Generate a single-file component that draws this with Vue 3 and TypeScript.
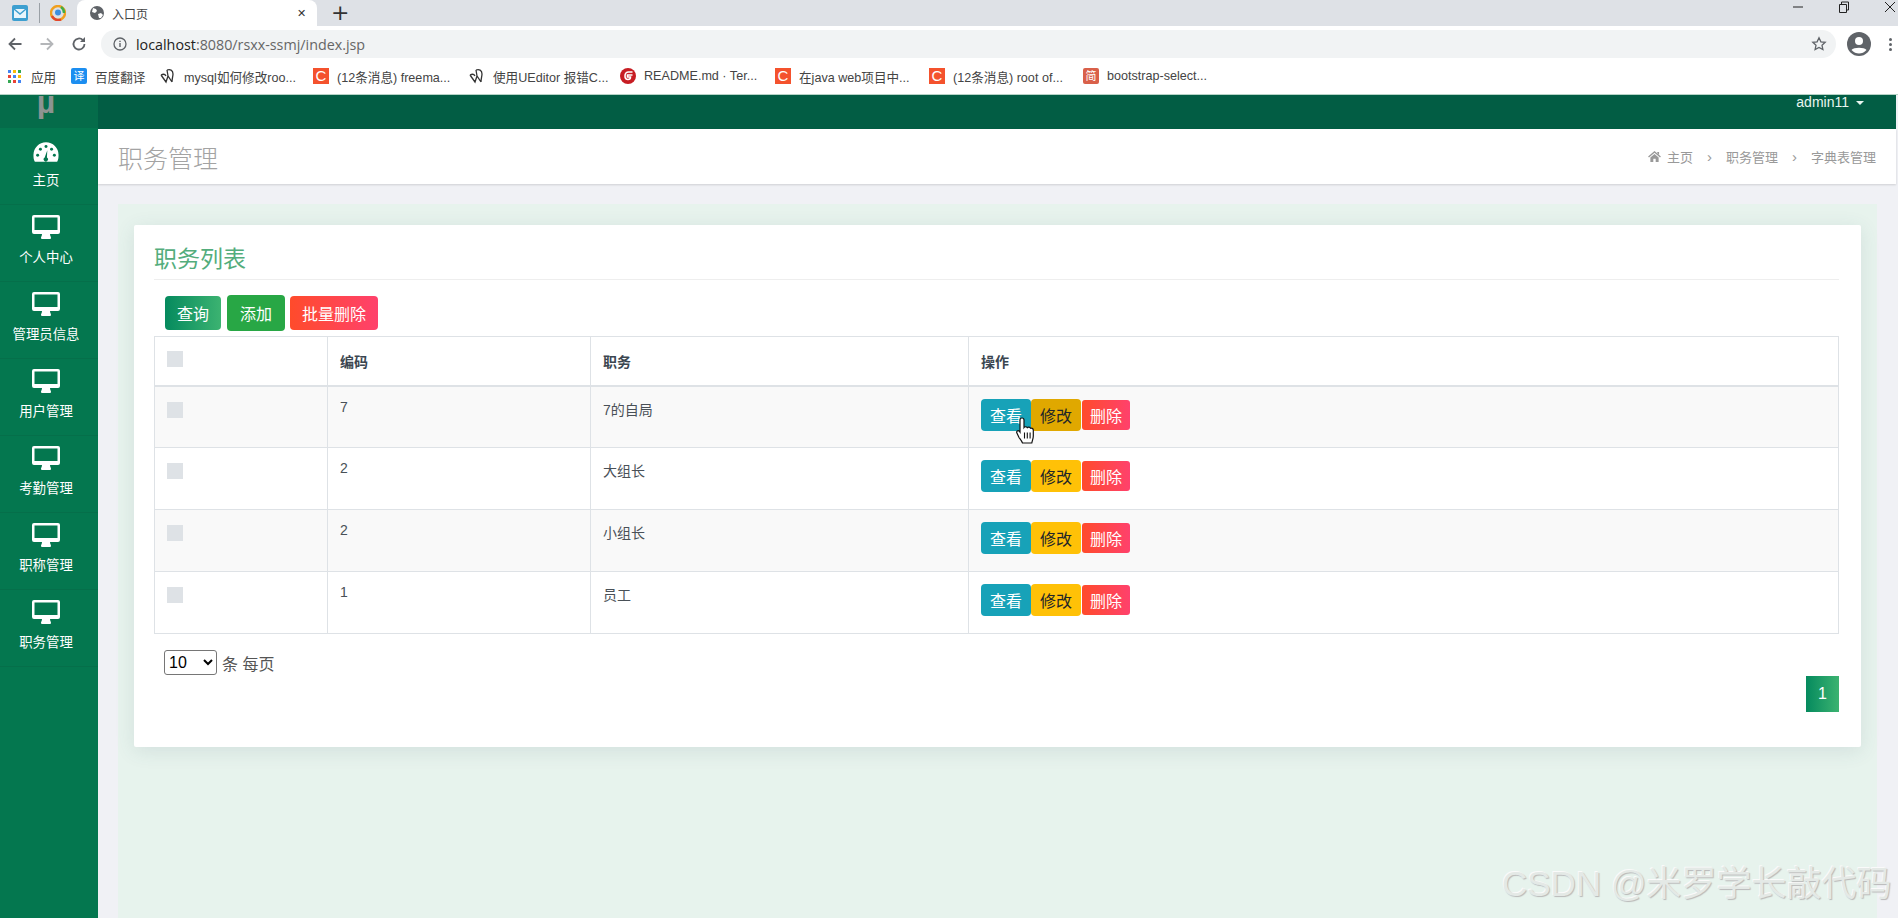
<script setup lang="ts">
interface Bookmark {
  label: string
  icon: 'translate' | 'feather' | 'csdn' | 'gitee' | 'jian'
  width: number
}

interface Post {
  code: string
  name: string
}

const bookmarks: Bookmark[] = [
  { label: '百度翻译', icon: 'translate', width: 89 },
  { label: 'mysql如何修改roo...', icon: 'feather', width: 153 },
  { label: '(12条消息) freema...', icon: 'csdn', width: 156 },
  { label: '使用UEditor 报错C...', icon: 'feather', width: 151 },
  { label: 'README.md · Ter...', icon: 'gitee', width: 155 },
  { label: '在java web项目中...', icon: 'csdn', width: 154 },
  { label: '(12条消息) root of...', icon: 'csdn', width: 154 },
  { label: 'bootstrap-select...', icon: 'jian', width: 130 }
]

const menu: string[] = ['个人中心', '管理员信息', '用户管理', '考勤管理', '职称管理', '职务管理']

const posts: Post[] = [
  { code: '7', name: '7的自局' },
  { code: '2', name: '大组长' },
  { code: '2', name: '小组长' },
  { code: '1', name: '员工' }
]
</script>

<template>
  <div class="page">
    <div class="tabstrip">
      <div class="pinned">
        <svg class="fav" viewBox="0 0 16 16"><rect width="16" height="16" rx="2" fill="#3d9fd0" /><path d="M2 4h12v9H2z" fill="#e8f5fb" /><path d="M2 4l6 5 6-5" fill="none" stroke="#3d9fd0" stroke-width="1.4" /></svg>
        <span class="pin-sep"></span>
        <svg class="fav" viewBox="0 0 16 16"><circle cx="8" cy="8" r="7" fill="none" stroke="#f0a020" stroke-width="2.4" /><path d="M2 11a7 7 0 0 0 9 3.500" fill="none" stroke="#e2452f" stroke-width="2.400" /><path d="M11 2a7 7 0 0 1 3 6" fill="none" stroke="#3fae49" stroke-width="2.400" /><circle cx="8" cy="7.500" r="3" fill="#3d8fe0" /></svg>
      </div>
      <div class="tab">
        <svg class="globe" viewBox="0 0 14 14"><circle cx="7" cy="7" r="7" fill="#5f6368" /><path d="M3 2l3 1 1 2-2 2-3-1zM8 8l3-1 2 2-2 3-2 0z" fill="#fff" /></svg>
        <span class="tab-title">入口页</span>
        <span class="tab-close">✕</span>
      </div>
      <span class="newtab">+</span>
      <div class="win-controls">
        <svg viewBox="0 0 12 12"><path d="M1 6h10" stroke="#222" stroke-width="1" /></svg>
        <svg viewBox="0 0 12 12"><path d="M1.500 3.500h7v8h-7zM3.500 3.500v-2.500h7v8h-2" fill="none" stroke="#222" stroke-width="1" /></svg>
        <svg viewBox="0 0 12 12"><path d="M1 1l10 10M11 1L1 11" stroke="#222" stroke-width="1" /></svg>
      </div>
    </div>

    <div class="toolbar">
      <svg class="nav-icon" viewBox="0 0 16 16"><path d="M14.500 8H2.500M8 2.500L2.500 8 8 13.500" fill="none" stroke="#5f6368" stroke-width="1.800" /></svg>
      <svg class="nav-icon" viewBox="0 0 16 16"><path d="M1.500 8h12M8 2.500L13.500 8 8 13.500" fill="none" stroke="#b4b6b9" stroke-width="1.800" /></svg>
      <svg class="nav-icon" viewBox="0 0 16 16"><path d="M13.500 8a5.500 5.500 0 1 1-1.600-3.900" fill="none" stroke="#5f6368" stroke-width="1.800" /><path d="M14 1v5h-5z" fill="#5f6368" /></svg>
      <div class="address">
        <svg class="info" viewBox="0 0 14 14"><circle cx="7" cy="7" r="6" fill="none" stroke="#5f6368" stroke-width="1.300" /><path d="M7 6v4M7 3.700v1.300" stroke="#5f6368" stroke-width="1.400" /></svg>
        <span class="url"><b>localhost</b>:8080/rsxx-ssmj/index.jsp</span>
        <svg class="star" viewBox="0 0 16 16"><path d="M8 1.800l1.900 4 4.300.500-3.200 3 .9 4.300L8 11.400l-3.900 2.200.9-4.300-3.200-3 4.300-.500z" fill="none" stroke="#5f6368" stroke-width="1.300" /></svg>
      </div>
      <svg class="avatar" viewBox="0 0 24 24"><circle cx="12" cy="12" r="12" fill="#5f6368" /><circle cx="12" cy="9" r="4" fill="#fff" /><path d="M4.500 18c2-3 13-3 15 0-2 2.500-5 3.500-7.500 3.500S6.500 20.500 4.500 18z" fill="#fff" /></svg>
      <span class="dots"><i></i><i></i><i></i></span>
    </div>

    <div class="bookmarks">
      <span class="apps"><i v-for="n in 9" :key="n" :class="`c${n % 4}`"></i></span>
      <span class="apps-label">应用</span>
      <div v-for="mark in bookmarks" :key="mark.label + mark.width" class="mark" :style="{ width: mark.width + 'px' }">
        <span v-if="mark.icon === 'translate'" class="mark-box mark-box--blue">译</span>
        <span v-else-if="mark.icon === 'csdn'" class="mark-box mark-box--orange">C</span>
        <span v-else-if="mark.icon === 'jian'" class="mark-box mark-box--jian">简</span>
        <svg v-else-if="mark.icon === 'gitee'" class="mark-svg" viewBox="0 0 16 16"><circle cx="8" cy="8" r="8" fill="#c71d23" /><path d="M12.500 7H7.500v2h3c0 1.500-1 2.500-2.500 2.500S5 10.500 5 8s1.500-4 3.500-4h4" fill="none" stroke="#fff" stroke-width="1.600" /></svg>
        <svg v-else class="mark-svg" viewBox="0 0 16 16"><path d="M1 7l5 7 2-6 4 6M7 2c3-1 6 0 6 4 0 2-1 5-1 8M1 7c2-1 4-1 5 1M7 2l1 6" fill="none" stroke="#333" stroke-width="1.300" /></svg>
        <span class="mark-label">{{ mark.label }}</span>
      </div>
    </div>

    <div class="shell">
      <aside class="sidebar">
        <div class="logo"><span>µ</span></div>
        <a class="side-item">
          <svg class="side-icon side-icon--gauge" viewBox="0 0 28 24">
            <path d="M2 22.500C.5 20.500 .5 17 .5 15a13.500 13.500 0 0 1 27 0c0 2 0 5.500-1.500 7.500z" fill="#fff" />
            <g fill="#04774f">
              <circle cx="5" cy="15.500" r="1.600" /><circle cx="8" cy="9" r="1.600" /><circle cx="14" cy="6" r="1.600" /><circle cx="20" cy="9" r="1.600" /><circle cx="23" cy="15.500" r="1.600" />
              <path d="M15.400 10l-.4 8a2.300 2.300 0 1 1-2.400 0z" />
            </g>
          </svg>
          <span class="side-label">主页</span>
        </a>
        <a v-for="item in menu" :key="item" class="side-item">
          <svg class="side-icon" viewBox="0 0 28 24">
            <path fill-rule="evenodd" d="M2 0h24a2 2 0 0 1 2 2v15a2 2 0 0 1-2 2h-8c0 2 1 2.500 1 4a1 1 0 0 1-1 1h-8a1 1 0 0 1-1-1c0-1.500 1-2 1-4H2a2 2 0 0 1-2-2V2a2 2 0 0 1 2-2zm.500 2.500v12.500h23V2.500z" fill="#fff" />
          </svg>
          <span class="side-label">{{ item }}</span>
        </a>
      </aside>

      <main class="main">
        <div class="topbar">
          <span class="user">admin11<i class="caret"></i></span>
        </div>
        <header class="heading">
          <h1>职务管理</h1>
          <nav class="crumbs">
            <svg viewBox="0 0 14 12"><path d="M7 0l7 6-1 1-6-5-6 5-1-1zM2.500 7L7 3.200 11.500 7v5H8.300V8.500H5.700V12H2.500zM10 1h2v3l-2-1.700z" fill="#999" /></svg>
            <span>主页</span>
            <em>›</em>
            <span>职务管理</span>
            <em>›</em>
            <span>字典表管理</span>
          </nav>
        </header>

        <section class="content">
          <div class="panel">
            <div class="card">
              <h2 class="card-title">职务列表</h2>
              <div class="actions">
                <button class="btn btn--query" type="button">查询</button>
                <button class="btn btn--add" type="button">添加</button>
                <button class="btn btn--danger" type="button">批量删除</button>
              </div>

              <table class="grid">
                <colgroup>
                  <col style="width: 173px" />
                  <col style="width: 263px" />
                  <col style="width: 378px" />
                  <col />
                </colgroup>
                <thead>
                  <tr>
                    <th class="check-cell"><span class="check"></span></th>
                    <th>编码</th>
                    <th>职务</th>
                    <th>操作</th>
                  </tr>
                </thead>
                <tbody>
                  <tr v-for="(post, index) in posts" :key="post.name">
                    <td class="check-cell"><span class="check"></span></td>
                    <td>{{ post.code }}</td>
                    <td>{{ post.name }}</td>
                    <td class="ops">
                      <div class="ops-row">
                        <button class="mini mini--view" type="button">查看</button>
                        <button class="mini mini--edit" :class="{ 'mini--hover': index === 0 }" type="button">修改</button>
                        <button class="mini mini--del" type="button">删除</button>
                        <svg v-if="index === 0" class="hand" viewBox="0 0 18 27">
                          <path d="M6 1c1.300 0 2 .9 2 2v7.500c.7-1 2.700-1 3.300.2.800-.8 2.700-.7 3.200.6 1-.4 2.700 0 2.800 1.700v6c0 2.500-1 4.500-1.500 7H6.500c-.7-2-2-3.500-3.500-5.500L.9 16c-.8-1.500 1-3 2.400-1.800L4 15.200V3c0-1.100.7-2 2-2z" fill="#fff" stroke="#111" stroke-width="1.200" />
                          <path d="M8.500 15.500v6M11.300 15.500v6M14.100 15.500v6" stroke="#111" stroke-width="1.100" />
                        </svg>
                      </div>
                    </td>
                  </tr>
                </tbody>
              </table>

              <div class="page-size">
                <select class="size-select">
                  <option>10</option>
                </select>
                <span>条 每页</span>
              </div>
              <div class="pager">
                <span class="page-current">1</span>
              </div>
            </div>
          </div>
        </section>
      </main>
    </div>

    <div class="watermark">CSDN @米罗学长敲代码</div>
  </div>
</template>

<style>
  html,
  body {
    margin: 0;
    height: 100%;
    overflow: hidden;
    background: #f0f1f5;
  }
</style>

<style scoped>
  .page {
    position: relative;
    display: flex;
    flex-direction: column;
    height: 918px;
    font-family: "Liberation Sans", "Noto Sans CJK SC", sans-serif;
    color: #555;
    overflow: hidden;
  }

  /* browser chrome */
  .tabstrip {
    display: flex;
    align-items: center;
    height: 26px;
    flex: none;
    background: #dee1e6;
  }

  .pinned {
    display: flex;
    align-items: center;
    width: 77px;
    height: 26px;
    padding-left: 12px;
    box-sizing: border-box;
  }

  .fav {
    width: 16px;
    height: 16px;
  }

  .pin-sep {
    width: 1px;
    height: 20px;
    margin: 0 10px 0 11px;
    background: #9aa0a6;
  }

  .tab {
    display: flex;
    align-items: center;
    width: 240px;
    height: 26px;
    box-sizing: border-box;
    padding: 0 11px 0 13px;
    background: #fff;
    border-radius: 8px 8px 0 0;
  }

  .globe {
    width: 14px;
    height: 14px;
    margin-right: 8px;
  }

  .tab-title {
    flex: 1;
    font-size: 12px;
    color: #444;
  }

  .tab-close {
    font-size: 11px;
    color: #333;
  }

  .newtab {
    margin-left: 14px;
    font-size: 22px;
    line-height: 22px;
    color: #333;
    font-family: "DejaVu Sans", sans-serif;
  }

  .win-controls {
    margin-left: auto;
    display: flex;
    gap: 34px;
    padding-right: 2px;
    align-self: flex-start;
    padding-top: 1px;
  }

  .win-controls svg {
    width: 12px;
    height: 12px;
  }

  .toolbar {
    display: flex;
    align-items: center;
    flex: none;
    height: 28px;
    padding: 4px 0 0 7px;
    background: #fff;
  }

  .nav-icon {
    width: 16px;
    height: 16px;
    margin-right: 16px;
  }

  .address {
    display: flex;
    align-items: center;
    width: 1735px;
    height: 28px;
    box-sizing: border-box;
    margin-left: -2px;
    padding: 0 9px 0 12px;
    background: #f1f3f4;
    border-radius: 14px;
  }

  .info {
    width: 14px;
    height: 14px;
    margin-right: 9px;
  }

  .url {
    flex: 1;
    font-family: "Open Sans", sans-serif;
    font-size: 14.3px;
    color: #666;
  }

  .url b {
    font-weight: 400;
    color: #222;
  }

  .star {
    width: 16px;
    height: 16px;
  }

  .avatar {
    width: 24px;
    height: 24px;
    margin-left: 11px;
  }

  .dots {
    display: flex;
    flex-direction: column;
    gap: 2px;
    margin-left: 18px;
  }

  .dots i {
    width: 3px;
    height: 3px;
    border-radius: 50%;
    background: #5f6368;
  }

  .bookmarks {
    display: flex;
    align-items: center;
    flex: none;
    height: 36px;
    padding-left: 8px;
    box-sizing: border-box;
    background: #fff;
    font-size: 12.6px;
    color: #444;
    white-space: nowrap;
  }

  .apps {
    display: grid;
    grid-template-columns: repeat(3, 3px);
    gap: 2px;
    width: 13px;
  }

  .apps i {
    width: 3px;
    height: 3px;
  }

  .apps .c0 { background: #ea4335; }
  .apps .c1 { background: #4285f4; }
  .apps .c2 { background: #fbbc05; }
  .apps .c3 { background: #34a853; }

  .apps-label {
    width: 40px;
    margin-left: 10px;
  }

  .mark {
    display: flex;
    align-items: center;
    flex: none;
    overflow: hidden;
  }

  .mark-box {
    flex: none;
    width: 16px;
    height: 16px;
    margin-right: 8px;
    line-height: 16px;
    text-align: center;
    color: #fff;
    font-size: 11px;
  }

  .mark-box--blue {
    background: #1c8ef0;
    border-radius: 2px;
  }

  .mark-box--orange {
    background: #f4522d;
    font-size: 15px;
  }

  .mark-box--jian {
    background: #d9604a;
    border-radius: 2px;
  }

  .mark-svg {
    flex: none;
    width: 16px;
    height: 16px;
    margin-right: 8px;
  }

  /* app */
  .shell {
    display: flex;
    flex: 1;
    min-height: 0;
    border-top: 1px solid #b5d3c6;
  }

  .sidebar {
    flex: none;
    width: 98px;
    background: #04774f;
    color: #fff;
  }

  .logo {
    height: 33px;
    padding-right: 6px;
    background: #056c4a;
    overflow: hidden;
    text-align: center;
  }

  .logo span {
    display: block;
    height: 24px;
    overflow: hidden;
    font-size: 32px;
    line-height: 14px;
    font-weight: 700;
    color: #8c9491;
  }

  .side-item {
    display: flex;
    flex-direction: column;
    align-items: center;
    height: 77px;
    box-sizing: border-box;
    padding: 10px 6px 0 0;
    border-bottom: 1px solid #056f4a;
  }

  .side-icon {
    width: 28px;
    height: 24px;
  }

  .side-icon--gauge {
    width: 26px;
    margin-top: 2px;
    margin-bottom: -2px;
  }

  .side-label {
    margin-top: 9px;
    font-size: 13.4px;
    line-height: 20px;
    white-space: nowrap;
  }

  .main {
    display: flex;
    flex-direction: column;
    flex: 1;
    min-width: 0;
  }

  .topbar {
    display: flex;
    justify-content: flex-end;
    flex: none;
    height: 34px;
    margin-right: 2px;
    background: #025d44;
  }

  .user {
    margin-right: 32px;
    font-size: 14px;
    line-height: 14px;
    color: #e8f5ef;
  }

  .caret {
    display: inline-block;
    margin-left: 7px;
    vertical-align: 2px;
    border-top: 4px solid #e8f5ef;
    border-left: 4px solid transparent;
    border-right: 4px solid transparent;
  }

  .heading {
    display: flex;
    align-items: center;
    justify-content: space-between;
    flex: none;
    height: 55px;
    margin-right: 2px;
    padding: 0 20px;
    box-sizing: border-box;
    background: #fff;
    box-shadow: 0 1px 2px rgba(0, 0, 0, 0.14);
  }

  .heading h1 {
    margin: 0;
    font-size: 25px;
    font-weight: 300;
    color: #a3a3a3;
  }

  .crumbs {
    display: flex;
    align-items: center;
    font-size: 13px;
    color: #999;
  }

  .crumbs svg {
    width: 13px;
    height: 11px;
    margin-right: 6px;
  }

  .crumbs em {
    width: 33px;
    font-style: normal;
    text-align: center;
    font-size: 15px;
  }

  .content {
    flex: 1;
    min-height: 0;
    padding: 20px 21px 0 20px;
  }

  .panel {
    height: 100%;
    padding: 21px 16px 0;
    box-sizing: border-box;
    background: #e7f3ed;
  }

  .card {
    height: 522px;
    padding: 20px 22px 0 20px;
    box-sizing: border-box;
    background: #fff;
    border-radius: 2px;
    box-shadow: 0 4px 20px rgba(60, 90, 110, 0.12);
  }

  .card-title {
    margin: 0;
    height: 34px;
    border-bottom: 1px solid #eee;
    font-size: 23px;
    line-height: 28px;
    font-weight: 400;
    color: #53ad7c;
  }

  .actions {
    display: flex;
    align-items: center;
    gap: 5px;
    height: 36px;
    margin-top: 15px;
    padding-left: 11px;
  }

  .btn {
    height: 34px;
    padding: 0;
    border: 0;
    border-radius: 4px;
    font-family: inherit;
    font-size: 16px;
    color: #fff;
  }

  .btn--query {
    width: 56px;
    background: linear-gradient(90deg, #058a5e, #3cb371);
  }

  .btn--add {
    width: 58px;
    height: 36px;
    margin-left: 1px;
    background: #28a745;
  }

  .btn--danger {
    width: 88px;
    background: linear-gradient(90deg, #ff4b2b, #ff416c);
  }

  .grid {
    width: 100%;
    margin-top: 5px;
    border-collapse: collapse;
    table-layout: fixed;
    font-size: 14px;
  }

  .grid th,
  .grid td {
    height: 62px;
    padding: 12px;
    box-sizing: border-box;
    border: 1px solid #dee2e6;
    text-align: left;
    vertical-align: top;
    font-weight: 400;
    color: #495057;
  }

  .grid th {
    height: 49px;
    vertical-align: middle;
    border-bottom: 2px solid #dee2e6;
    font-weight: 600;
    font-size: 14px;
    color: #3b4650;
  }

  .grid .check-cell {
    vertical-align: top;
    line-height: 0;
  }

  .grid th.check-cell {
    padding-top: 14px;
  }

  .grid td.check-cell {
    padding-top: 15px;
  }

  .check {
    display: block;
    width: 16px;
    height: 16px;
    background: #dee2e6;
  }

  .grid tbody tr:nth-child(odd) {
    background: #f9f9f9;
  }

  .ops-row {
    position: relative;
    display: flex;
    align-items: center;
  }

  .mini {
    width: 50px;
    height: 32px;
    padding: 0;
    border: 0;
    border-radius: 4px;
    font-family: inherit;
    font-size: 16px;
    color: #fff;
  }

  .mini--view {
    background: #17a2b8;
  }

  .mini--edit {
    background: #ffc107;
    color: #212529;
  }

  .mini--hover {
    background: #e0a800;
  }

  .mini--del {
    width: 48px;
    height: 30px;
    margin-left: 1px;
    border-radius: 3px;
    background: linear-gradient(90deg, #ff4b2b, #ff416c);
  }

  /* mouse pointer captured in the screenshot */
  .hand {
    position: absolute;
    left: 35px;
    top: 18px;
    width: 18px;
    height: 27px;
  }

  .page-size {
    display: flex;
    align-items: center;
    gap: 5px;
    margin-top: 16px;
    padding-left: 10px;
    font-size: 16px;
    color: #555;
  }

  .size-select {
    width: 53px;
    height: 25px;
    font-family: "Liberation Sans", sans-serif;
    font-size: 16px;
    color: #000;
    background: #fff;
    border-radius: 3px;
  }

  .pager {
    display: flex;
    justify-content: flex-end;
    margin-top: 1px;
  }

  .page-current {
    width: 33px;
    height: 36px;
    line-height: 36px;
    text-align: center;
    font-size: 16px;
    color: #fff;
    background: linear-gradient(90deg, #058a5e, #3cb371);
  }

  .watermark {
    position: absolute;
    left: 1502px;
    top: 862px;
    font-size: 35px;
    line-height: 44px;
    white-space: nowrap;
    color: #e4e9e6;
    text-shadow: 1px 1px 1px #b9b9b9, -1px -1px 0 #fafafa;
  }
</style>
